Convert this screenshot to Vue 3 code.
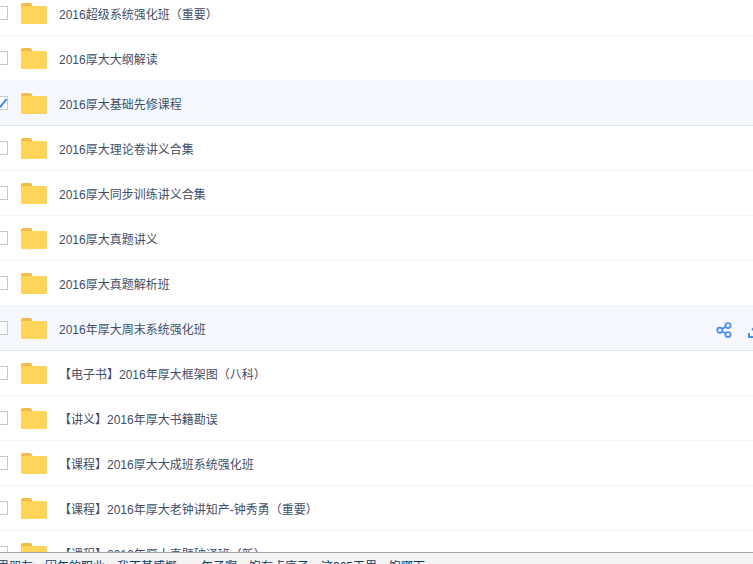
<script setup>
const rows = [
  { name: '2016超级系统强化班（重要）' },
  { name: '2016厚大大纲解读' },
  { name: '2016厚大基础先修课程', state: 'checked' },
  { name: '2016厚大理论卷讲义合集' },
  { name: '2016厚大同步训练讲义合集' },
  { name: '2016厚大真题讲义' },
  { name: '2016厚大真题解析班' },
  { name: '2016年厚大周末系统强化班', state: 'hover' },
  { name: '【电子书】2016年厚大框架图（八科）' },
  { name: '【讲义】2016年厚大书籍勘误' },
  { name: '【课程】2016厚大大成班系统强化班' },
  { name: '【课程】2016年厚大老钟讲知产-钟秀勇（重要）' },
  { name: '【课程】2016年厚大真题破译班（新）' }
]
</script>

<template>
  <div class="page">
    <ul class="list">
      <li v-for="row in rows" :key="row.name" class="row" :class="row.state">
        <span class="check">
          <svg v-if="row.state === 'checked'" class="tick" viewBox="0 0 12 12" width="12" height="12">
            <path d="M5 10.5 L11.5 2" fill="none" stroke="#3b86f5" stroke-width="2" />
          </svg>
        </span>
        <svg class="folder" viewBox="0 0 26 21" width="26" height="21">
          <path d="M0 2a2 2 0 0 1 2-2h7a2 2 0 0 1 2 1.5L12 4H0z" fill="#eebd4e" />
          <rect x="0" y="3" width="26" height="18" rx="1.5" fill="#ffd459" />
        </svg>
        <span class="name">{{ row.name }}</span>
        <span v-if="row.state === 'hover'" class="actions">
          <svg viewBox="0 0 16 16" width="16" height="16" fill="none" stroke="#4a8cf0" stroke-width="1.7">
            <circle cx="3.8" cy="8.2" r="2.6" />
            <circle cx="12" cy="3.6" r="2.6" />
            <circle cx="12" cy="12.6" r="2.6" />
            <path d="M6 7 L9.8 4.8 M6 9.5 L9.8 11.4" />
          </svg>
          <svg viewBox="0 0 16 16" width="16" height="16" fill="none" stroke="#4a8cf0" stroke-width="2">
            <path d="M8 1 V10 M4 6.5 L8 10.5 L12 6.5 M1 11 V15 H15 V11" />
          </svg>
        </span>
      </li>
    </ul>
    <footer class="bar">里朋友，因年的职业，我不甚感慨，一年孑啊，饱有点序子，这365天里，饱哪下</footer>
  </div>
</template>

<style scoped>
.page {
  height: 564px;
  overflow: hidden;
  display: flex;
  flex-direction: column;
  background: #fff;
  font-family: "Liberation Sans", "Noto Sans CJK SC", sans-serif;
}
.list {
  flex: 1;
  min-height: 0;
  overflow: hidden;
  list-style: none;
  margin: -9px 0 0;
  padding: 0;
}
.row {
  box-sizing: border-box;
  height: 45px;
  display: flex;
  align-items: center;
  padding-left: 21px;
  border-bottom: 1px solid #f2f6fd;
  position: relative;
  white-space: nowrap;
  overflow: hidden;
}
.row.checked,
.row.hover {
  background: #f5f9ff;
  border-bottom-color: #d9e9fb;
}
.check {
  position: absolute;
  left: -6px;
  top: 15px;
  box-sizing: border-box;
  width: 14px;
  height: 14px;
  border: 1px solid #c8c8c8;
  background: #fff;
}
.tick {
  position: absolute;
  left: 0;
  top: 0;
}
.folder {
  flex: none;
  margin-right: 12px;
}
.name {
  font-size: 12px;
  color: #424e67;
}
.actions {
  position: absolute;
  left: 716px;
  top: 16px;
  display: flex;
  gap: 16px;
}
.bar {
  flex: none;
  box-sizing: border-box;
  height: 12px;
  border-top: 1px solid #a5a5a5;
  background: #f4f4f4;
  padding: 6px 0 0;
  margin-left: -3px;
  font-size: 12px;
  line-height: 16px;
  color: #0b3a66;
  white-space: nowrap;
  overflow: hidden;
}
</style>
